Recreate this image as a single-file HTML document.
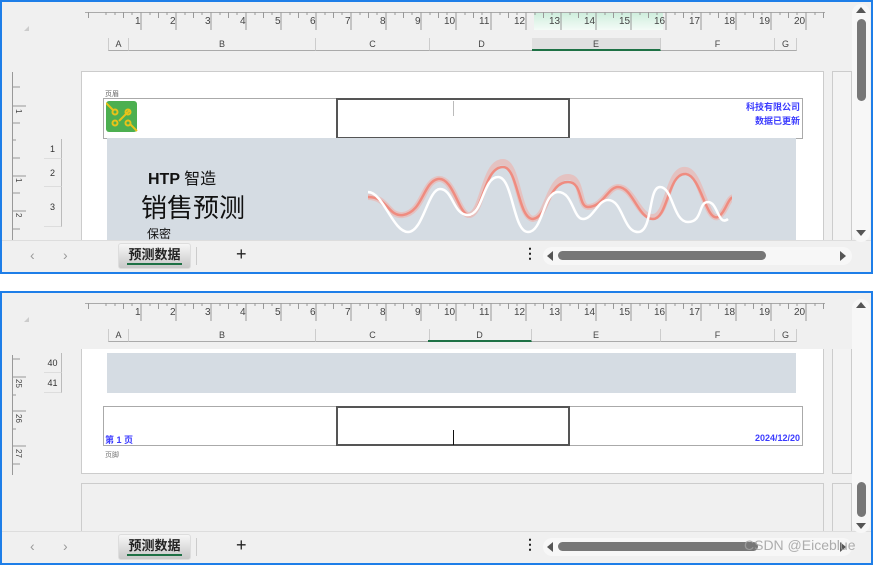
<!DOCTYPE html>
<html><head><meta charset="utf-8">
<style>
*{margin:0;padding:0;box-sizing:border-box}
body{width:873px;height:565px;background:#fff;position:relative;overflow:hidden;font-family:"Liberation Sans","Noto Sans CJK SC",sans-serif}
.panel{position:absolute;left:0;width:873px;border:2px solid #1e7ee8;background:#f0f0f0;overflow:hidden}
.a{position:absolute}
.ruler{position:absolute;left:83px;top:10px;width:740px;height:18px;border-top:1px solid #aaa;background:#f0f0f0}
.colh{position:absolute;top:36px;height:13px;border-bottom:1px solid #aaa;border-right:1px solid #ccc;font-size:9px;color:#444;text-align:center;line-height:12px}
.rowh{position:absolute;left:42px;width:18px;border-right:1px solid #bbb;border-bottom:1px solid #ddd;font-size:9px;color:#333;text-align:center}
.vr{position:absolute;left:10px;width:22px;border-left:1px solid #999}
.tabbar{position:absolute;left:0;width:869px;height:32px;background:#f0f0f0;border-top:1px solid #ddd}
.tab{position:absolute;left:116px;top:2px;width:73px;height:26px;background:linear-gradient(#f6f6f6,#c8c8c8);border:1px solid #ddd;border-radius:3px;font-size:13px;text-align:center;line-height:22px;color:#222;font-weight:bold}
.tab:after{content:"";position:absolute;left:8px;right:8px;bottom:3px;height:2px;background:#1e7145}
.hs{position:absolute;left:541px;top:6px;width:309px;height:18px;background:#f7f7f7;border-radius:9px}
.hth{position:absolute;left:556px;top:10px;width:208px;height:9px;background:#777;border-radius:5px}
.vs{position:absolute;left:850px;width:18px;background:#f7f7f7;border-radius:9px}
.vth{position:absolute;left:855px;width:9px;background:#777;border-radius:5px}
</style></head><body>

<!-- PANEL 1 -->
<div class="panel" style="top:0;height:274px">
 <div class="a" style="left:22px;top:24px;width:0;height:0;border-left:5px solid transparent;border-bottom:5px solid #ccc"></div>
 <div class="ruler"><div class="a" style="left:449px;top:0;width:129px;height:17px;background:linear-gradient(#cfeedd,#f4fbf7)"></div></div>
 <svg class="a" style="left:83px;top:10px" width="740" height="18">
  <g stroke="#999" stroke-width="1">
  <path d="M56 0v18M91 0v18M126 0v18M161 0v18M196 0v18M231 0v18M266 0v18M301 0v18M336 0v18M371 0v18M406 0v18M441 0v18M476 0v18M511 0v18M546 0v18M581 0v18M616 0v18M651 0v18M686 0v18M721 0v18"/>
  <path d="M3.5 0v6M38.5 0v6M73.5 0v6M108.5 0v6M143.5 0v6M178.5 0v6M213.5 0v6M248.5 0v6M283.5 0v6M318.5 0v6M353.5 0v6M388.5 0v6M423.5 0v6M458.5 0v6M493.5 0v6M528.5 0v6M563.5 0v6M598.5 0v6M633.5 0v6M668.5 0v6M703.5 0v6M738.5 0v6"/>
  <path d="M21 0v3M30 0v3M47 0v3M65 0v3M82 0v3M100 0v3M117 0v3M135 0v3M152 0v3M170 0v3M187 0v3M205 0v3M222 0v3M240 0v3M257 0v3M275 0v3M292 0v3M310 0v3M327 0v3M345 0v3M362 0v3M380 0v3M397 0v3M415 0v3M432 0v3M450 0v3M467 0v3M485 0v3M502 0v3M520 0v3M537 0v3M555 0v3M572 0v3M590 0v3M607 0v3M625 0v3M642 0v3M660 0v3M677 0v3M695 0v3M712 0v3M730 0v3"/>
  </g>
  <g font-size="10" fill="#444" font-family="Liberation Sans">
  <text x="50" y="12">1</text><text x="85" y="12">2</text><text x="120" y="12">3</text><text x="155" y="12">4</text><text x="190" y="12">5</text><text x="225" y="12">6</text><text x="260" y="12">7</text><text x="295" y="12">8</text><text x="330" y="12">9</text><text x="359" y="12">10</text><text x="394" y="12">11</text><text x="429" y="12">12</text><text x="464" y="12">13</text><text x="499" y="12">14</text><text x="534" y="12">15</text><text x="569" y="12">16</text><text x="604" y="12">17</text><text x="639" y="12">18</text><text x="674" y="12">19</text><text x="709" y="12">20</text>
  </g>
 </svg>
 <div class="colh" style="left:106px;width:21px;border-left:1px solid #ccc">A</div>
 <div class="colh" style="left:127px;width:187px">B</div>
 <div class="colh" style="left:314px;width:114px">C</div>
 <div class="colh" style="left:428px;width:104px">D</div>
 <div class="colh" style="left:530px;width:129px;background:#e0e0e0;border-bottom:2px solid #1e7145">E</div>
 <div class="colh" style="left:659px;width:114px">F</div>
 <div class="colh" style="left:773px;width:22px">G</div>

 <div class="vr" style="top:70px;height:170px"></div>
 <svg class="a" style="left:10px;top:70px" width="22" height="170"><g stroke="#999"><path d="M0 15h8M0 34h14M0 51h8M0 68h4M0 86h8M0 104h14M0 121h8M0 139h14M0 157h8"/></g>
 <g font-size="8" fill="#444"><text transform="translate(4,37) rotate(90)">1</text><text transform="translate(4,106) rotate(90)">1</text><text transform="translate(4,141) rotate(90)">2</text></g></svg>
 <div class="rowh" style="top:137px;height:20px;line-height:20px">1</div>
 <div class="rowh" style="top:157px;height:28px;line-height:28px">2</div>
 <div class="rowh" style="top:185px;height:40px;line-height:40px">3</div>

 <div class="a" style="left:79px;top:69px;width:743px;height:180px;background:#fff;border:1px solid #ccc"></div>
 <div class="a" style="left:830px;top:69px;width:20px;height:180px;border:1px solid #ccc;background:#f3f3f3"></div>
 <div class="a" style="left:103px;top:87px;font-size:7px;color:#666">页眉</div>
 <div class="a" style="left:101px;top:96px;width:700px;height:41px;border:1px solid #aaa;background:#fff"></div>
 <div class="a" style="left:334px;top:96px;width:234px;height:41px;border:2px solid #555;background:#fff"></div>
 <div class="a" style="left:451px;top:99px;width:1px;height:15px;background:#bbb"></div>
 <svg class="a" style="left:104px;top:99px" width="32" height="32"><rect width="31" height="31" rx="3" fill="#4caf50"/><g stroke="#e8c21a" stroke-width="2" fill="none"><path d="M0 2L7 9M24 9L13 20M24 23L31 30"/><circle cx="9" cy="11" r="2.5"/><circle cx="22" cy="11" r="2.5"/><circle cx="9" cy="22" r="2.5"/><circle cx="22" cy="22" r="2.5"/></g></svg>
 <div class="a" style="left:600px;top:98px;width:198px;text-align:right;font-size:9px;color:#3b3bff;line-height:14px;font-weight:bold">科技有限公司<br>数据已更新</div>
 <div class="a" style="left:105px;top:136px;width:689px;height:104px;background:#d5dce3"></div>
 <div class="a" style="left:146px;top:163px;font-size:16px;color:#111;font-weight:bold">HTP <span style="font-weight:normal">智造</span></div>
 <div class="a" style="left:139px;top:186px;font-size:26px;color:#111">销售预测</div>
 <div class="a" style="left:145px;top:223px;font-size:12px;color:#111">保密</div>
 <svg class="a" style="left:366px;top:155px" width="364" height="85" fill="none">
  <path d="M0 40C20 40 20 60 35 58C55 55 55 25 70 22C85 20 90 55 100 58C115 60 115 5 135 5C150 5 150 60 165 62C180 60 180 20 200 20C215 20 210 50 220 50C235 50 240 30 250 30C265 30 270 60 285 60C300 60 300 10 318 13C333 15 338 65 350 60C358 55 360 40 366 40" stroke="#f3a7a0" stroke-width="6" opacity=".5"/>
  <path d="M0 40C20 40 20 60 35 58C55 55 55 25 70 22C85 20 90 55 100 58C115 60 115 10 135 10C150 10 150 62 165 62C180 60 180 25 200 25C215 25 210 50 220 50C235 50 240 30 250 30C265 30 270 62 285 62C300 62 300 15 318 17C333 19 338 65 350 60C358 55 360 40 366 40" stroke="#ef8c80" stroke-width="2.5"/>
  <path d="M0 35C15 35 25 75 40 75C55 75 60 32 72 32C85 32 85 58 100 58C115 58 115 20 130 20C145 20 145 75 160 75C175 75 175 35 190 35C205 35 205 62 215 62C225 62 230 43 240 43C255 43 255 75 270 75C285 75 280 30 292 30C305 30 305 65 320 65C335 65 330 45 340 45C350 45 350 70 360 62" stroke="#fff" stroke-width="2.5"/>
 </svg>

 <div class="tabbar" style="top:238px">
  <div class="a" style="left:28px;top:6px;font-size:14px;color:#999">&lsaquo;</div>
  <div class="a" style="left:61px;top:6px;font-size:14px;color:#999">&rsaquo;</div>
  <div class="tab">预测数据</div>
  <div class="a" style="left:194px;top:6px;width:1px;height:18px;background:#ccc"></div>
  <div class="a" style="left:234px;top:3px;font-size:18px;color:#222">+</div>
  <div class="a" style="left:521px;top:4px;font-size:14px;color:#222;font-weight:bold">&#8942;</div>
  <div class="hs"></div><div class="hth"></div>
  <div class="a" style="left:545px;top:10px;border-right:6px solid #555;border-top:5px solid transparent;border-bottom:5px solid transparent"></div>
  <div class="a" style="left:838px;top:10px;border-left:6px solid #555;border-top:5px solid transparent;border-bottom:5px solid transparent"></div>
 </div>
 <div class="vs" style="top:2px;height:238px"></div>
 <div class="vth" style="top:17px;height:82px"></div>
 <div class="a" style="left:854px;top:5px;border-bottom:6px solid #555;border-left:5px solid transparent;border-right:5px solid transparent"></div>
 <div class="a" style="left:854px;top:228px;border-top:6px solid #555;border-left:5px solid transparent;border-right:5px solid transparent"></div>
</div>

<!-- PANEL 2 -->
<div class="panel" style="top:291px;height:274px">
 <div class="a" style="left:22px;top:24px;width:0;height:0;border-left:5px solid transparent;border-bottom:5px solid #ccc"></div>
 <div class="ruler"></div>
 <svg class="a" style="left:83px;top:10px" width="740" height="18">
  <g stroke="#999" stroke-width="1">
  <path d="M56 0v18M91 0v18M126 0v18M161 0v18M196 0v18M231 0v18M266 0v18M301 0v18M336 0v18M371 0v18M406 0v18M441 0v18M476 0v18M511 0v18M546 0v18M581 0v18M616 0v18M651 0v18M686 0v18M721 0v18"/>
  <path d="M3.5 0v6M38.5 0v6M73.5 0v6M108.5 0v6M143.5 0v6M178.5 0v6M213.5 0v6M248.5 0v6M283.5 0v6M318.5 0v6M353.5 0v6M388.5 0v6M423.5 0v6M458.5 0v6M493.5 0v6M528.5 0v6M563.5 0v6M598.5 0v6M633.5 0v6M668.5 0v6M703.5 0v6M738.5 0v6"/>
  <path d="M21 0v3M30 0v3M47 0v3M65 0v3M82 0v3M100 0v3M117 0v3M135 0v3M152 0v3M170 0v3M187 0v3M205 0v3M222 0v3M240 0v3M257 0v3M275 0v3M292 0v3M310 0v3M327 0v3M345 0v3M362 0v3M380 0v3M397 0v3M415 0v3M432 0v3M450 0v3M467 0v3M485 0v3M502 0v3M520 0v3M537 0v3M555 0v3M572 0v3M590 0v3M607 0v3M625 0v3M642 0v3M660 0v3M677 0v3M695 0v3M712 0v3M730 0v3"/>
  </g>
  <g font-size="10" fill="#444" font-family="Liberation Sans">
  <text x="50" y="12">1</text><text x="85" y="12">2</text><text x="120" y="12">3</text><text x="155" y="12">4</text><text x="190" y="12">5</text><text x="225" y="12">6</text><text x="260" y="12">7</text><text x="295" y="12">8</text><text x="330" y="12">9</text><text x="359" y="12">10</text><text x="394" y="12">11</text><text x="429" y="12">12</text><text x="464" y="12">13</text><text x="499" y="12">14</text><text x="534" y="12">15</text><text x="569" y="12">16</text><text x="604" y="12">17</text><text x="639" y="12">18</text><text x="674" y="12">19</text><text x="709" y="12">20</text>
  </g>
 </svg>
 <div class="colh" style="left:106px;width:21px;border-left:1px solid #ccc">A</div>
 <div class="colh" style="left:127px;width:187px">B</div>
 <div class="colh" style="left:314px;width:114px">C</div>
 <div class="colh" style="left:426px;width:104px;border-bottom:2px solid #1e7145">D</div>
 <div class="colh" style="left:530px;width:129px">E</div>
 <div class="colh" style="left:659px;width:114px">F</div>
 <div class="colh" style="left:773px;width:22px">G</div>

 <div class="vr" style="top:62px;height:120px"></div>
 <svg class="a" style="left:10px;top:62px" width="22" height="120"><g stroke="#999"><path d="M0 4h8M0 22h14M0 40h4M0 56h14M0 74h4M0 91h14M0 109h8"/></g>
 <g font-size="8" fill="#444"><text transform="translate(4,24) rotate(90)">25</text><text transform="translate(4,59) rotate(90)">26</text><text transform="translate(4,94) rotate(90)">27</text></g></svg>
 <div class="rowh" style="top:60px;height:20px;line-height:20px">40</div>
 <div class="rowh" style="top:80px;height:20px;line-height:20px">41</div>

 <div class="a" style="left:79px;top:56px;width:743px;height:125px;background:#fff;border:1px solid #ccc;border-top:none"></div>
 <div class="a" style="left:830px;top:56px;width:20px;height:125px;border:1px solid #ccc;border-top:none;background:#f3f3f3"></div>
 <div class="a" style="left:105px;top:60px;width:689px;height:40px;background:#d5dce3"></div>
 <div class="a" style="left:101px;top:113px;width:700px;height:40px;border:1px solid #aaa;background:#fff"></div>
 <div class="a" style="left:334px;top:113px;width:234px;height:40px;border:2px solid #555;background:#fff"></div>
 <div class="a" style="left:451px;top:137px;width:1px;height:15px;background:#111"></div>
 <div class="a" style="left:103px;top:140px;font-size:9px;color:#3b3bff;font-weight:bold">第 1 页</div>
 <div class="a" style="left:700px;top:140px;width:98px;text-align:right;font-size:9px;color:#3b3bff;font-weight:bold">2024/12/20</div>
 <div class="a" style="left:103px;top:157px;font-size:7px;color:#777">页脚</div>
 <div class="a" style="left:79px;top:190px;width:743px;height:60px;border:1px solid #ccc;border-bottom:none"></div>
 <div class="a" style="left:830px;top:190px;width:20px;height:60px;border:1px solid #ccc;border-bottom:none"></div>

 <div class="tabbar" style="top:238px">
  <div class="a" style="left:28px;top:6px;font-size:14px;color:#999">&lsaquo;</div>
  <div class="a" style="left:61px;top:6px;font-size:14px;color:#999">&rsaquo;</div>
  <div class="tab">预测数据</div>
  <div class="a" style="left:194px;top:6px;width:1px;height:18px;background:#ccc"></div>
  <div class="a" style="left:234px;top:3px;font-size:18px;color:#222">+</div>
  <div class="a" style="left:521px;top:4px;font-size:14px;color:#222;font-weight:bold">&#8942;</div>
  <div class="hs"></div><div class="hth" style="width:200px"></div>
  <div class="a" style="left:545px;top:10px;border-right:6px solid #555;border-top:5px solid transparent;border-bottom:5px solid transparent"></div>
  <div class="a" style="left:838px;top:10px;border-left:6px solid #555;border-top:5px solid transparent;border-bottom:5px solid transparent"></div>
  <div class="a" style="left:742px;top:5px;font-size:14px;color:rgba(160,160,160,.85)">CSDN @Eiceblue</div>
 </div>
 <div class="vs" style="top:6px;height:234px"></div>
 <div class="vth" style="top:189px;height:35px"></div>
 <div class="a" style="left:854px;top:9px;border-bottom:6px solid #555;border-left:5px solid transparent;border-right:5px solid transparent"></div>
 <div class="a" style="left:854px;top:230px;border-top:6px solid #555;border-left:5px solid transparent;border-right:5px solid transparent"></div>
</div>
</body></html>
